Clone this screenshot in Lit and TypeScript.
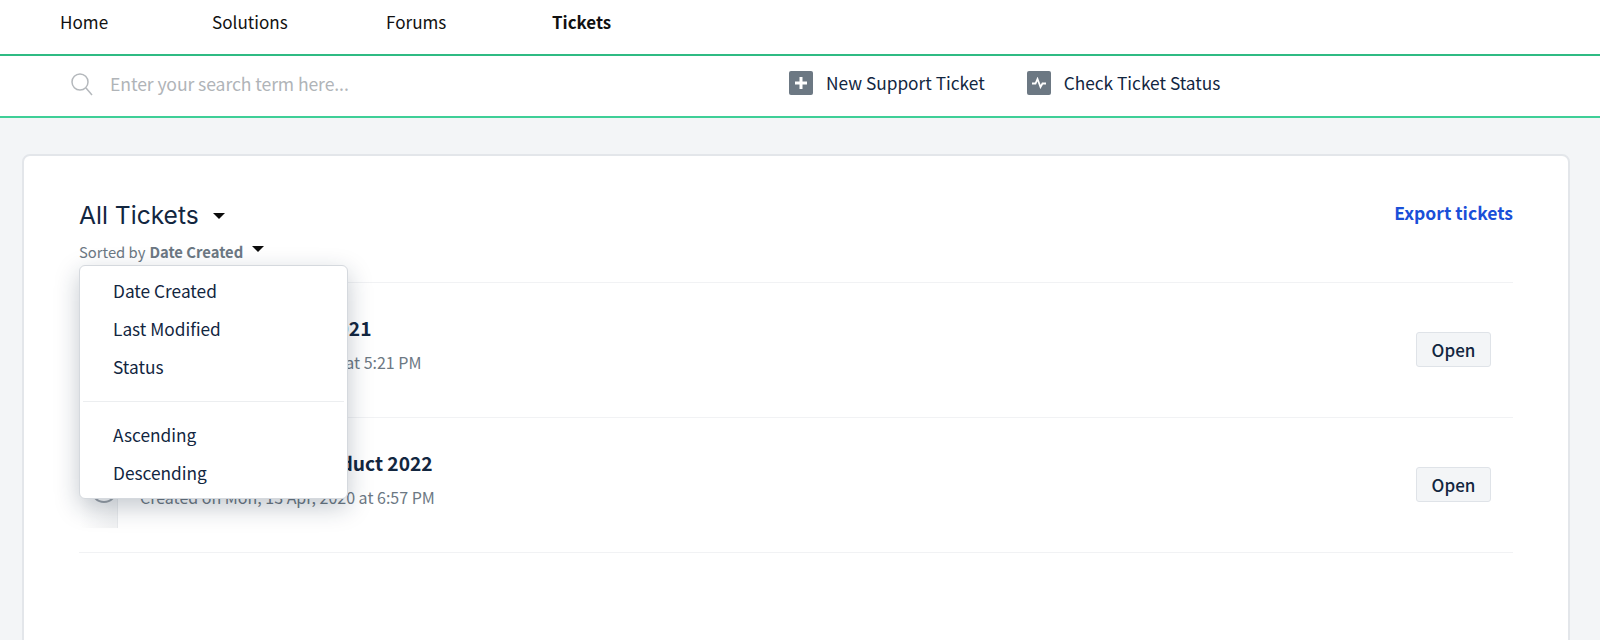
import { LitElement, html, css } from "lit";
import { customElement } from "lit/decorators.js";

@customElement("app-root")
export class AppRoot extends LitElement {
  static styles = css`
    :host { display: block; height: 640px; overflow: hidden; background: #f3f5f7; font-family: "Noto Sans CJK SC", "Source Sans Pro", "Noto Sans", sans-serif; color: #12263f; }
    * { box-sizing: border-box; }
    .nav { height: 56px; background: #fff; border-bottom: 2px solid #2fbb83; display: flex; padding: 0 0 12px 60px; align-items: center; font-size: 17.1px; color: #111; }
    .nav span { display: block; }
    .nav span:nth-child(1) { width: 152px; }
    .nav span:nth-child(2) { width: 174px; }
    .nav span:nth-child(3) { width: 166px; }
    .nav .on { font-weight: 700; font-size: 16.9px; }
    .search { height: 62px; background: #fff; border-bottom: 2px solid #3fcf97; display: flex; align-items: center; padding: 0 0 5px 70px; }
    .search svg { display: block; }
    .ph { font-size: 17.6px; color: #b0b4b8; margin-left: 16px; width: 679px; letter-spacing: -.1px; }
    .act { display: flex; align-items: center; font-size: 17.3px; color: #12263f; margin-bottom: 2px; }
    .act .ic { width: 24px; height: 24px; border-radius: 2px; background: #6c7883; margin-right: 13px; display: flex; align-items: center; justify-content: center; }
    .act + .act { margin-left: 42px; }
    .card { margin: 36px 0 0 22px; width: 1548px; height: 560px; background: #fff; border: 2px solid #e3e6ea; border-radius: 8px; padding: 0 55px 0 55px; position: relative; }
    .head { height: 127px; border-bottom: 1px solid #f1f2f4; display: flex; justify-content: space-between; }
    .title { margin-top: 41px; font-family: "Inter", "Lato", sans-serif; font-size: 24.6px; line-height: 36px; color: #12263f; display: flex; align-items: center; }
    .sort { margin-top: 8px; font-size: 14.8px; line-height: 22px; color: #6c7883; display: flex; align-items: center; }
    .sort b { margin-left: 4px; }
    .caret { width: 0; height: 0; border-left: 6px solid transparent; border-right: 6px solid transparent; border-top: 6px solid #0c0c0c; display: block; }
    .title .caret { margin-left: 14px; margin-top: 2px; }
    .sort .caret { margin-left: 9px; margin-top: -7px; }
    .export { margin-top: 45px; font-size: 17.5px; line-height: 24px; font-weight: 700; color: #1a4fd8; }
    .row { height: 135px; border-bottom: 1px solid #f1f2f4; display: flex; align-items: center; justify-content: space-between; padding: 0 22px 0 61px; position: relative; }
    .txt { margin-bottom: 13px; }
    .t { font-size: 19.2px; line-height: 28px; font-weight: 700; color: #12263f; margin-bottom: 9px; }
    .s { font-size: 16px; line-height: 22px; color: #6c7883; }
    .btn { width: 75px; height: 35px; border: 1px solid #dfe3e8; border-radius: 3px; background: #f3f5f7; font-size: 17px; font-weight: 500; color: #12263f; display: flex; align-items: center; justify-content: center; margin-bottom: 2px; }
    .rail { position: absolute; left: 0; bottom: 24px; width: 39px; height: 60px; border-right: 1px solid #e8eaec; background: linear-gradient(to right, rgba(240,241,243,0), #f2f3f4 90%); }
    .dot { position: absolute; left: 12px; bottom: 49px; width: 26px; height: 26px; border: 2px solid #9aa1a8; border-radius: 50%; background: #fff; }
    .menu { position: absolute; left: 55px; top: 109px; width: 269px; height: 234px; background: #fff; border: 1px solid #d5d9de; border-radius: 6px; box-shadow: 0 8px 24px rgba(18,38,63,.25); padding: 6px 3px 0; font-size: 17.3px; color: #12263f; }
    .menu div.i { height: 38px; line-height: 38px; padding-left: 30px; }
    .menu hr { border: 0; border-top: 1px solid #eceef0; margin: 15px 0 14px; }
  `;

  render() {
    return html`
      <div class="nav"><span>Home</span><span>Solutions</span><span>Forums</span><span class="on">Tickets</span></div>
      <div class="search">
        <svg width="24" height="24" viewBox="0 0 24 24" fill="none" stroke="#b4b8bc" stroke-width="1.5"><circle cx="10" cy="10" r="8"/><path d="M16 16l6 7"/></svg>
        <div class="ph">Enter your search term here...</div>
        <div class="act"><span class="ic"><svg width="14" height="14" viewBox="0 0 14 14"><path d="M7 1v12M1 7h12" stroke="#fff" stroke-width="3" fill="none"/></svg></span>New Support Ticket</div>
        <div class="act"><span class="ic"><svg width="16" height="12" viewBox="0 0 16 12"><path d="M1 6.5h3.5L6.5 2l3 8 2-3.5H15" stroke="#fff" stroke-width="1.8" fill="none"/></svg></span>Check Ticket Status</div>
      </div>
      <div class="card">
        <div class="head">
          <div>
            <div class="title">All Tickets<i class="caret"></i></div>
            <div class="sort">Sorted by <b>Date Created</b><i class="caret"></i></div>
          </div>
          <div class="export">Export tickets</div>
        </div>
        <div class="row">
          <div class="txt"><div class="t">Customer Requests 2021</div><div class="s">Created on Fri, 13 Apr, 2020 at 5:21 PM</div></div>
          <div class="btn">Open</div>
        </div>
        <div class="row">
          <i class="rail"></i><i class="dot"></i>
          <div class="txt"><div class="t">Feedback on new product 2022</div><div class="s">Created on Mon, 13 Apr, 2020 at 6:57 PM</div></div>
          <div class="btn">Open</div>
        </div>
        <div class="menu">
          <div class="i">Date Created</div>
          <div class="i">Last Modified</div>
          <div class="i">Status</div>
          <hr />
          <div class="i">Ascending</div>
          <div class="i">Descending</div>
        </div>
      </div>
    `;
  }
}
